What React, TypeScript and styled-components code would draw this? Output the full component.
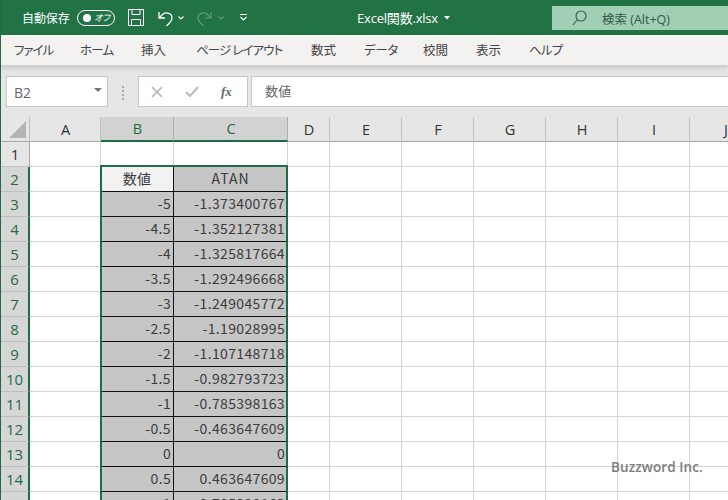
import React from "react";
import styled, { createGlobalStyle } from "styled-components";

const Global = createGlobalStyle`
  html, body { margin: 0; padding: 0; background: #fff; overflow: hidden; }
  #root { width: 728px; height: 500px; overflow: hidden; }
`;
const UI = `"Noto Sans CJK JP", "Noto Sans", sans-serif`;
const GREEN = "#217346";
const SEL = "#1e6b45";

const Page = styled.div`
  position: relative; width: 728px; height: 500px; overflow: hidden;
  display: flex; flex-direction: column; font-family: ${UI}; background: #fff;
  &::after { content: ""; position: absolute; left: 0; top: 0; bottom: 0; width: 1px; background: ${SEL}; z-index: 3; }
`;
const TitleBar = styled.header`
  height: 35px; flex: none; background: ${GREEN}; color: #fff; display: flex; align-items: center;
  padding-left: 22px; font-size: 12px; position: relative;
`;
const AutoSave = styled.span` width: 49px; white-space: nowrap; letter-spacing: -0.1px; `;
const Toggle = styled.span`
  width: 38px; height: 16px; margin-left: 6px; border: 1px solid #fff; border-radius: 8px; box-sizing: border-box;
  display: flex; align-items: center; justify-content: space-between; padding: 0 4px 0 5px; flex: none;
  font-size: 9px; line-height: 14px; font-style: italic; font-feature-settings: "palt";
`;
const Knob = styled.i` width: 8px; height: 8px; border-radius: 50%; background: #fff; display: block; `;
const QuickIcon = styled.svg<{ $ml: number; $mt?: number }>`
  margin-left: ${p => p.$ml}px; margin-top: ${p => p.$mt ?? 0}px; flex: none; display: block;
`;
const FileName = styled.div`
  position: absolute; left: 357px; top: 0; height: 35px; display: flex; align-items: center;
  font-family: "Open Sans", "Noto Sans CJK JP", sans-serif; font-size: 13px; letter-spacing: -0.2px; gap: 6px;
`;
const SearchBox = styled.div`
  position: absolute; left: 552px; top: 6px; width: 176px; height: 24px; background: #a0cfb3; color: #33594a;
  display: flex; align-items: center; padding-left: 20px; gap: 15px; font-size: 12.500px; box-sizing: border-box;
  font-family: "Open Sans", "Noto Sans CJK JP", sans-serif;
`;
const MenuBar = styled.nav`
  height: 30px; flex: none; background: #f3f2f1; display: flex; align-items: center; padding: 0 0 2px 14px; box-sizing: border-box;
  font-size: 12.500px; color: #444; box-shadow: 0 3px 5px rgba(0,0,0,.13); position: relative; z-index: 1;
  font-feature-settings: "palt";
`;
const MenuItem = styled.span<{ $w: number; $track: number }>`
  width: ${p => p.$w}px; flex: none; white-space: nowrap; letter-spacing: ${p => p.$track}px;
`;
const FormulaBar = styled.div`
  height: 52px; flex: none; background: #e6e6e6; display: flex; align-items: flex-start; padding: 11px 0 0 6px; box-sizing: border-box;
`;
const FieldBox = styled.div<{ $w: number; $ml?: number }>`
  width: ${p => p.$w}px; height: 31px; margin-left: ${p => p.$ml ?? 0}px; flex: none; box-sizing: border-box;
  background: #fff; border: 1px solid #c6c6c6; display: flex; align-items: center; color: #666; font-size: 13px;
  position: relative;
`;
const NameText = styled.span` font-family: "Open Sans", sans-serif; font-size: 14px; padding: 1px 0 0 7px; color: #666; `;
const Caret = styled.i`
  position: absolute; right: 5px; top: 11px; border: 4px solid transparent; border-top: 4px solid #777; display: block;
`;
const Dots = styled.div` width: 3px; margin-left: 14px; display: flex; flex-direction: column; gap: 2px; margin-top: 10px; flex: none; `;
const Dot = styled.i` width: 2px; height: 2px; background: #aaa; display: block; `;
const FxIcons = styled.div` display: flex; align-items: center; color: #bbb; width: 100%; `;
const FxMark = styled.span`
  font-family: "Liberation Serif", serif; font-style: italic; font-weight: bold; font-size: 13px; color: #666; margin-left: 22px;
`;
const FormulaText = styled.span` padding: 0 0 2px 13px; font-size: 13px; letter-spacing: .3px; color: #666; `;

const Grid = styled.div`
  display: grid; grid-template-columns: 30px 71px 73px 114px 42px 72px 72px 72px 72px 72px 72px;
  grid-template-rows: 25px repeat(15, 25px); position: relative; font-size: 14px; flex: none;
`;
const Corner = styled.div`
  background: #e6e6e6; border-right: 1px solid #c0c0c0; border-bottom: 1px solid #a8a8a8; box-sizing: border-box; position: relative;
  &::after { content: ""; position: absolute; right: 3px; bottom: 3px; width: 0; height: 0;
    border-style: solid; border-width: 0 0 17px 17px; border-color: transparent transparent #b4b4b4 transparent; }
`;
const ColHead = styled.div<{ $sel?: boolean }>`
  box-sizing: border-box; background: ${p => (p.$sel ? "#d2d2d2" : "#e6e6e6")};
  color: ${p => (p.$sel ? SEL : "#333")}; border-right: 1px solid ${p => (p.$sel ? "#aeaeae" : "#c4c4c4")};
  border-bottom: ${p => (p.$sel ? `2px solid ${SEL}` : "1px solid #a8a8a8")};
  display: flex; align-items: center; justify-content: center; font-family: "Open Sans", sans-serif; font-size: 14.500px; padding-left: 1px;
`;
const RowHead = styled.div<{ $sel?: boolean }>`
  box-sizing: border-box; background: ${p => (p.$sel ? "#d6d6d6" : "#e6e6e6")}; color: ${p => (p.$sel ? SEL : "#333")};
  border-bottom: 1px solid ${p => (p.$sel ? "#bdbdbd" : "#c4c4c4")};
  border-right: ${p => (p.$sel ? `2px solid ${SEL}` : "1px solid #a8a8a8")};
  padding-left: 1px;
  display: flex; align-items: center; justify-content: center; font-family: "Open Sans", sans-serif; font-size: 15px;
`;
const Cell = styled.div`
  box-sizing: border-box; background: #fff; border-right: 1px solid #d4d4d4; border-bottom: 1px solid #d4d4d4;
`;
const DataCell = styled.div<{ $kind?: "num" | "head" | "sel" }>`
  box-sizing: border-box; background: ${p => (p.$kind === "sel" ? "#f2f2f2" : "#c6c6c6")};
  border-right: 1px solid #111; border-bottom: 1px solid #111; color: #3c3c3c;
  display: flex; align-items: center; justify-content: ${p => (p.$kind === "num" ? "flex-end" : "center")};
  padding: 0 ${p => (p.$kind === "num" ? "2px 3px 0" : "0 2px 0")}; font-size: 14px;
  letter-spacing: ${p => (p.$kind === "head" ? "1px" : ".35px")}; white-space: nowrap; overflow: hidden;
`;
const Selection = styled.div`
  position: absolute; left: 100px; top: 48px; width: 188px; height: 345px; border: 2px solid ${SEL}; box-sizing: border-box; pointer-events: none;
`;
const Watermark = styled.div`
  position: absolute; left: 611px; top: 458px; font-family: "Open Sans", sans-serif; font-weight: 600; font-size: 13.500px; letter-spacing: .1px; color: #777; opacity: .95; z-index: 2;
`;

const cols = ["A", "B", "C", "D", "E", "F", "G", "H", "I", "J"];
const data: [string, string][] = [
  ["-5", "-1.373400767"], ["-4.5", "-1.352127381"], ["-4", "-1.325817664"], ["-3.5", "-1.292496668"],
  ["-3", "-1.249045772"], ["-2.5", "-1.19028995"], ["-2", "-1.107148718"], ["-1.5", "-0.982793723"],
  ["-1", "-0.785398163"], ["-0.5", "-0.463647609"], ["0", "0"], ["0.5", "0.463647609"], ["1", "0.785398163"],
];
const menu: [string, number, number][] = [
  ["ファイル", 66, -1], ["ホーム", 61, -0.8], ["挿入", 55, 0], ["ページ レイアウト", 115, -0.9], ["数式", 53, 0],
  ["データ", 59, -0.3], ["校閲", 53, 0], ["表示", 53, 0], ["ヘルプ", 60, -0.8],
];
const blanks = (n: number, key: string) => Array.from({ length: n }, (_, i) => <Cell key={key + i} />);

export default function App() {
  return (
    <Page>
      <Global />
      <TitleBar>
        <AutoSave>自動保存</AutoSave>
        <Toggle><Knob /><span>オフ</span></Toggle>
        <QuickIcon $ml={13} width="16" height="17" viewBox="0 0 16 17" fill="none" stroke="#fff" strokeWidth="1">
          <path d="M.5.5h15v16H.5zM4 .5v5h8v-5M3.500 16.500v-6h9v6" />
        </QuickIcon>
        <QuickIcon $ml={14} $mt={3} width="15" height="16" viewBox="0 0 15 16" fill="none" stroke="#fff" strokeWidth="1.300">
          <path d="M1 1v6h6M1.500 6.500 5 3c3-2 9-1 9 3.500 0 3-2 5.500-5.500 8.500" />
        </QuickIcon>
        <QuickIcon $ml={5} width="6" height="4" viewBox="0 0 6 4" fill="none" stroke="#fff" strokeWidth="1.100"><path d="M.5.5 3 3l2.500-2.500" /></QuickIcon>
        <QuickIcon $ml={13} $mt={3} width="15" height="16" viewBox="0 0 15 16" fill="none" stroke="#5c9c7b" strokeWidth="1.200">
          <path d="M14 1v6H8M13.500 6.500 10 3c-3-2-9-1-9 3.500 0 3 2 5.500 5.500 8.500" />
        </QuickIcon>
        <QuickIcon $ml={6} width="6" height="4" viewBox="0 0 6 4" fill="none" stroke="#5c9c7b" strokeWidth="1.100"><path d="M.5.5 3 3l2.500-2.500" /></QuickIcon>
        <QuickIcon $ml={16} width="7" height="7" viewBox="0 0 7 7" fill="none" stroke="#fff" strokeWidth="1.100"><path d="M0 .5h7M.5 3 3.500 6l3-3" /></QuickIcon>
        <FileName>
          <span>Excel関数.xlsx</span>
          <QuickIcon $ml={0} width="6" height="4" viewBox="0 0 6 4" fill="#fff"><path d="M0 0h6L3 3.500z" /></QuickIcon>
        </FileName>
        <SearchBox>
          <svg width="15" height="16" viewBox="0 0 15 16" fill="none" stroke="#2f5c48" strokeWidth="1.100">
            <circle cx="9" cy="6" r="5" /><path d="M5.500 9.500 1 15" />
          </svg>
          <span>検索 (Alt+Q)</span>
        </SearchBox>
      </TitleBar>
      <MenuBar>
        {menu.map(([t, w, k]) => <MenuItem key={t} $w={w} $track={k}>{t}</MenuItem>)}
      </MenuBar>
      <FormulaBar>
        <FieldBox $w={102}><NameText>B2</NameText><Caret /></FieldBox>
        <Dots><Dot /><Dot /><Dot /><Dot /></Dots>
        <FieldBox $w={110} $ml={13}>
          <FxIcons>
            <svg style={{ marginLeft: 12 }} width="12" height="12" viewBox="0 0 11 11" stroke="#bbb" strokeWidth="1.500"><path d="M1 1l9 9M10 1l-9 9" /></svg>
            <svg style={{ marginLeft: 22 }} width="14" height="11" viewBox="0 0 14 11" fill="none" stroke="#bbb" strokeWidth="2"><path d="M1 6l4 4 8-9" /></svg>
            <FxMark>fx</FxMark>
          </FxIcons>
        </FieldBox>
        <FieldBox $w={480} $ml={3}><FormulaText>数値</FormulaText></FieldBox>
      </FormulaBar>
      <Grid>
        <Corner />
        {cols.map(c => <ColHead key={c} $sel={c === "B" || c === "C"}>{c}</ColHead>)}
        <RowHead>1</RowHead>
        {blanks(10, "r1")}
        <RowHead $sel>2</RowHead>
        <Cell />
        <DataCell $kind="sel">数値</DataCell>
        <DataCell $kind="head">ATAN</DataCell>
        {blanks(7, "r2")}
        {data.map(([a, b], i) => (
          <React.Fragment key={i}>
            <RowHead $sel>{i + 3}</RowHead>
            <Cell />
            <DataCell $kind="num">{a}</DataCell>
            <DataCell $kind="num">{b}</DataCell>
            {blanks(7, "d" + i)}
          </React.Fragment>
        ))}
        <Selection />
      </Grid>
      <Watermark>Buzzword Inc.</Watermark>
    </Page>
  );
}
